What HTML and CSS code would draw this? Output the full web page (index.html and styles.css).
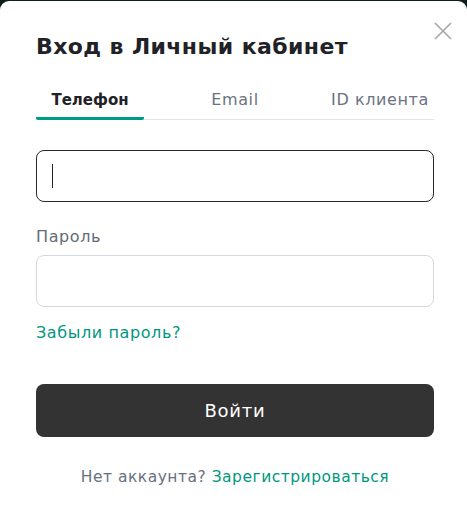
FILE: index.html
```html
<!DOCTYPE html>
<html lang="ru">
<head>
<meta charset="utf-8">
<title>Вход в Личный кабинет</title>
<link rel="stylesheet" href="styles.css">
</head>
<body>
<div class="modal">
  <button class="close" aria-label="Закрыть">
    <svg width="18" height="18" viewBox="0 0 18 18"><path d="M1 1L17 17M17 1L1 17" stroke="#a3a6aa" stroke-width="1.6" fill="none"/></svg>
  </button>
  <h1 class="title">Вход в Личный кабинет</h1>
  <div class="tabs">
    <div class="tab active">Телефон</div>
    <div class="tab">Email</div>
    <div class="tab">ID клиента</div>
  </div>
  <div class="field first">
    <div class="input focused"><span class="caret"></span></div>
  </div>
  <div class="field">
    <label class="label">Пароль</label>
    <div class="input"></div>
  </div>
  <a class="forgot" href="#">Забыли пароль?</a>
  <button class="submit">Войти</button>
  <p class="signup">Нет аккаунта? <a href="#">Зарегистрироваться</a></p>
</div>
</body>
</html>
```
FILE: styles.css
```css
* { box-sizing: border-box; }
html, body { margin: 0; padding: 0; }
body {
  background: #0f1d1c;
  font-family: "DejaVu Sans", Inter, sans-serif;
  height: 526px;
  overflow: hidden;
}
.modal {
  position: relative;
  margin-top: 1px;
  background: #fff;
  border-radius: 9px;
  height: 540px;
  padding: 32px 33px 0 36px;
}
.close {
  position: absolute;
  top: 21px;
  right: 15px;
  width: 18px;
  height: 18px;
  padding: 0;
  border: 0;
  background: none;
  display: flex;
}
.title {
  margin: 0;
  font-size: 22px;
  font-weight: 700;
  letter-spacing: 0.4px;
  color: #1f2226;
  line-height: 28px;
}
.tabs {
  margin-top: 24px;
  display: grid;
  grid-template-columns: 108px 108px 108px;
  justify-content: space-between;
  border-bottom: 1px solid #e2e5e9;
}
.tab {
  text-align: center;
  font-size: 16px;
  letter-spacing: 0.6px;
  font-weight: 400;
  color: #6b7280;
  padding: 5px 0 7px;
  line-height: 20px;
  margin-bottom: -1px;
  border-bottom: 3px solid transparent;
  white-space: nowrap;
}
.tab.active {
  color: #1f2226;
  font-size: 15px;
  letter-spacing: 0;
  font-weight: 600;
  border-bottom-color: #009b85;
  border-radius: 2px;
}
.field { display: flex; flex-direction: column; }
.field.first { margin-top: 30px; }
.input {
  height: 52px;
  border: 1px solid #d4d7dd;
  border-radius: 8px;
  display: flex;
  align-items: center;
  padding-left: 15px;
}
.input.focused { border-color: #27292c; }
.caret {
  width: 1px;
  height: 24px;
  background: #222;
}
.label {
  margin-top: 25px;
  margin-bottom: 8px;
  font-size: 16px;
  letter-spacing: 0.6px;
  line-height: 20px;
  color: #646b75;
}
.forgot {
  display: block;
  margin-top: 16px;
  font-size: 16px;
  letter-spacing: 0.6px;
  line-height: 20px;
  color: #00977f;
  text-decoration: none;
}
.submit {
  display: block;
  width: 100%;
  margin-top: 41px;
  height: 53px;
  border: 0;
  border-radius: 8px;
  background: #333333;
  color: #fff;
  font-family: inherit;
  font-size: 18px;
  letter-spacing: 0.8px;
  font-weight: 500;
}
.signup {
  margin: 30px 0 0;
  text-align: center;
  font-size: 15.5px;
  letter-spacing: 0.5px;
  line-height: 20px;
  color: #677080;
}
.signup a { color: #00977f; text-decoration: none; }
```
